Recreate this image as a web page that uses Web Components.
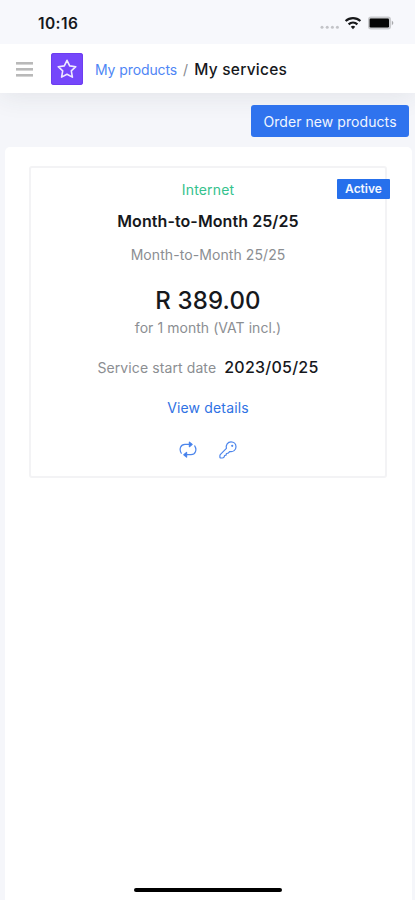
<!DOCTYPE html>
<html lang="en">
<head>
<meta charset="utf-8">
<meta name="viewport" content="width=device-width, initial-scale=1">
<title>My services</title>
<style>
body {
    margin: 0;
    height: 900px;
    overflow: hidden;
    background: #f5f6fa;
    color: #16181c;
    font-family: Inter, "Liberation Sans", sans-serif;
    font-size: 14px;
}
</style>
</head>
<body>
<services-page></services-page>

<script>
class StatusBar extends HTMLElement {
    constructor() {
        super()
        this.attachShadow({mode: 'open'})
    }
    connectedCallback() {
        this.shadowRoot.innerHTML = `
        <style>
        :host {
            display: flex;
            align-items: center;
            justify-content: space-between;
            height: 44px;
            padding: 3px 20px 0 38px;
            box-sizing: border-box;
            background: #f7f8fc;
        }
        .time { font-size: 15.5px; font-weight: 600; letter-spacing: .4px; }
        svg { display: block; }
        </style>
        <span class="time">${this.getAttribute('time')}</span>
        <svg width="75" height="16" viewBox="0 0 75 16">
            <g fill="#c3c4c8">
                <circle cx="2" cy="11.2" r="1.5"/><circle cx="7.2" cy="11.2" r="1.5"/>
                <circle cx="12.4" cy="11.2" r="1.5"/><circle cx="17.4" cy="11.2" r="1.5"/>
            </g>
            <g fill="none" stroke="#17181a" stroke-width="2.2">
                <path d="M25.6 5a11 11 0 0 1 14.8 0"/>
                <path d="M28.6 8.4a6.6 6.6 0 0 1 8.8 0"/>
            </g>
            <path d="M33 13.2l-2.2-2.5a3.4 3.4 0 0 1 4.4 0z" fill="#17181a"/>
            <rect x="48" y=".6" width="23" height="12.8" rx="3" fill="#c9cacd"/>
            <rect x="49.6" y="2.6" width="19.4" height="8.8" rx="1.2" fill="#050505"/>
            <path d="M71.8 4.6q3.2 2.4 0 4.8z" fill="#a9aaad"/>
        </svg>
        `
    }
}
window.customElements.define('status-bar', StatusBar)


class AppHeader extends HTMLElement {
    constructor() {
        super()
        this.attachShadow({mode: 'open'})
    }
    connectedCallback() {
        this.shadowRoot.innerHTML = `
        <style>
        :host {
            display: flex;
            align-items: center;
            height: 49px;
            padding-left: 16px;
            box-sizing: border-box;
            background: #fff;
            box-shadow: 0 4px 26px rgba(40, 50, 70, .09);
            clip-path: inset(0 0 -50px 0);
        }
        .menu { display: block; margin-top: 2px; }
        .logo {
            display: flex;
            align-items: center;
            justify-content: center;
            width: 32px;
            height: 32px;
            margin: 1px 12px 0 18px;
            border-radius: 3px;
            background: #7547fb;
            box-shadow: inset 0 0 0 1px #6d3df0;
        }
        nav { display: flex; align-items: baseline; margin-top: 1px; white-space: pre; }
        .back { color: #4f86f5; letter-spacing: -.1px; }
        .slash { color: #85888e; margin: 0 6px 0 6px; }
        .page { font-size: 15.5px; font-weight: 500; letter-spacing: .25px; }
        </style>
        <svg class="menu" width="17" height="15" viewBox="0 0 17 15" fill="#b9b9b9">
            <rect y="0" width="17" height="2.6"/><rect y="6" width="17" height="2.6"/><rect y="12" width="17" height="2.6"/>
        </svg>
        <div class="logo">
            <svg width="20" height="20" viewBox="0 0 20 20" fill="none" stroke="#efe9ff" stroke-width="1.6" stroke-linejoin="round">
                <path d="M10 1.3l2.7 5.6 6.1.8-4.5 4.2 1.1 6.2L10 15.2l-5.4 2.9 1.1-6.2L1.2 7.7l6.1-.8z"/>
            </svg>
        </div>
        <nav><span class="back"><slot></slot></span><span class="slash">/</span><span class="page">${this.getAttribute('page')}</span></nav>
        `
    }
}
window.customElements.define('app-header', AppHeader)


class PrimaryButton extends HTMLElement {
    constructor() {
        super()
        this.attachShadow({mode: 'open'})
        this.shadowRoot.innerHTML = `
        <style>
        :host { display: block; position: relative; }
        button {
            display: block;
            width: 158px;
            height: 32px;
            padding: 0;
            border: 0;
            border-radius: 3px;
            background: #2f73ee;
            color: #f1f6ff;
            font: inherit;
            letter-spacing: .07px;
        }
        </style>
        <button><slot></slot></button>
        `
    }
}
window.customElements.define('primary-button', PrimaryButton)


class ServiceCard extends HTMLElement {
    constructor() {
        super()
        this.attachShadow({mode: 'open'})
    }
    connectedCallback() {
        const get = name => this.getAttribute(name)
        this.shadowRoot.innerHTML = `
        <style>
        :host {
            display: flex;
            flex-direction: column;
            align-items: center;
            position: relative;
            height: 312px;
            padding-top: 12px;
            box-sizing: border-box;
            border: 2px solid #f3f3f5;
            border-radius: 3px;
            white-space: nowrap;
        }
        .status {
            position: absolute;
            top: 11px;
            right: -5px;
            width: 53px;
            height: 20px;
            line-height: 20px;
            text-align: center;
            border-radius: 1px;
            background: #2670ec;
            color: #f3f8ff;
            font-size: 12px;
            font-weight: 600;
        }
        .type { line-height: 20px; color: #35c28d; letter-spacing: .15px; }
        .name { margin-top: 10px; line-height: 22px; font-size: 16px; font-weight: 600; letter-spacing: .08px; }
        .plan { margin-top: 13px; line-height: 20px; letter-spacing: .08px; }
        .price { margin-top: 20px; line-height: 32px; font-size: 24px; font-weight: 500; letter-spacing: .15px; }
        .period { margin-top: 1px; line-height: 20px; letter-spacing: .05px; }
        .plan, .period, .start { color: #8b8e92; }
        .start { display: flex; align-items: baseline; gap: 8px; margin-top: 18px; line-height: 22px; letter-spacing: .1px; }
        .date { color: #16181c; font-size: 16px; font-weight: 500; letter-spacing: .25px; }
        .details { margin-top: 19px; line-height: 20px; color: #2f72e4; letter-spacing: .15px; }
        .actions { display: flex; gap: 22px; margin-top: 23px; }
        svg { display: block; fill: none; stroke: #4d86ec; stroke-width: 1.2; stroke-linecap: round; stroke-linejoin: round; }
        </style>
        <div class="status">${get('status')}</div>
        <div class="type">${get('type')}</div>
        <div class="name">${get('name')}</div>
        <div class="plan">${get('plan')}</div>
        <div class="price">${get('price')}</div>
        <div class="period">${get('period')}</div>
        <div class="start"><span>Service start date</span><span class="date">${get('start')}</span></div>
        <div class="details">View details</div>
        <div class="actions">
            <svg width="18" height="18" viewBox="0 0 18 18">
                <path d="M2.3 12.2C-.2 8.2 1.6 3.4 6 3.4h6"/>
                <path d="M10.4 1.2l2.8 2.2-2.8 2.3z" fill="#3c7aea"/>
                <path d="M15.7 4.9c2.5 4 .7 8.800-3.700 8.800H6"/>
                <path d="M7.6 11.4l-2.8 2.3L7.6 16z" fill="#3c7aea"/>
            </svg>
            <svg width="18" height="18" viewBox="0 0 18 18">
                <path d="M7.4 7.4C6.5 4 8.8.9 12 .9c2.8 0 5 2.1 5 4.9 0 3.2-2.8 5.4-6.2 4.700L9.200 12.200l-1.800.3-.3 1.600-1.500.4-.4 1.400Q4.400 17 3.200 17H1.900Q.9 17 .9 16v-1.300q0-.8.6-1.400z"/>
                <circle cx="13.2" cy="4.8" r=".5"/>
            </svg>
        </div>
        `
    }
}
window.customElements.define('service-card', ServiceCard)


class ServicesPage extends HTMLElement {
    constructor() {
        super()
        this.attachShadow({mode: 'open'})
    }
    connectedCallback() {
        this.shadowRoot.innerHTML = `
        <style>
        :host { display: flex; flex-direction: column; height: 900px; }
        .toolbar { display: flex; justify-content: flex-end; padding: 12px 6px 10px 0; }
        main {
            display: flex;
            flex: 1;
            flex-direction: column;
            justify-content: space-between;
            position: relative;
            margin: 0 3px 0 5px;
            padding: 19px 25px 8px 24px;
            border-radius: 5px 5px 0 0;
            background: #fff;
        }
        .home { align-self: center; width: 148px; height: 4px; border-radius: 2px; background: #000; }
        </style>
        <status-bar time="10:16"></status-bar>
        <app-header page="My services"><a>My products</a></app-header>
        <div class="toolbar"><primary-button>Order new products</primary-button></div>
        <main>
            <service-card type="Internet" status="Active" name="Month-to-Month 25/25" plan="Month-to-Month 25/25"
                price="R 389.00" period="for 1 month (VAT incl.)" start="2023/05/25"></service-card>
            <div class="home"></div>
        </main>
        `
    }
}
window.customElements.define('services-page', ServicesPage)
</script>
</body>
</html>
